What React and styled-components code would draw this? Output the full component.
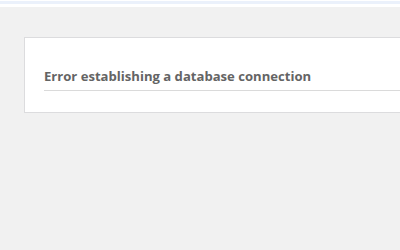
import React from "react";
import styled, { createGlobalStyle } from "styled-components";

const GlobalStyle = createGlobalStyle`
  html, body {
    margin: 0;
    padding: 0;
    background: #f1f1f1;
  }
  body {
    width: 400px;
    height: 250px;
    overflow: hidden;
  }
`;

const Page = styled.div`
  display: flex;
  flex-direction: column;
  height: 250px;
  background: #f1f1f1;
`;

const TopStrip = styled.div`
  height: 7px;
  background: #fff;
  border-top: 1px solid #fff;
  box-sizing: border-box;
  display: flex;
  flex-direction: column;
`;

const BlueBand = styled.div`
  height: 3px;
  background: #ebf1fb;
`;

const Body = styled.div`
  padding: 30px 0 0 24px;
`;

const Card = styled.div`
  background: #fff;
  border: 1px solid #dcdcde;
  border-right: none;
  box-sizing: border-box;
  height: 76px;
  padding: 30px 0 0 19px;
`;

const Title = styled.h1`
  margin: 0;
  padding: 0 0 6px 0;
  border-bottom: 1px solid #dadada;
  color: #646464;
  font-family: "Open Sans", "Noto Sans", sans-serif;
  font-size: 13.1px;
  font-weight: 700;
  line-height: 16px;
  white-space: nowrap;
`;

export default function App() {
  return (
    <>
      <GlobalStyle />
      <Page>
        <TopStrip>
          <BlueBand />
        </TopStrip>
        <Body>
          <Card>
            <Title>Error establishing a database connection</Title>
          </Card>
        </Body>
      </Page>
    </>
  );
}
